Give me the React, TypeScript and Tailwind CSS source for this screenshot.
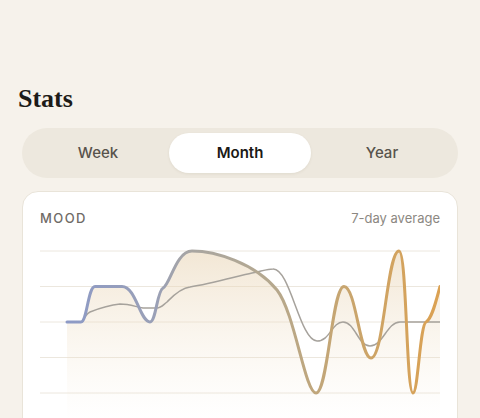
import { useState } from 'react'

const RANGES = ['Week', 'Month', 'Year'] as const

// y positions of the 5 mood levels (5 at top, 1 at bottom)
const GRID = [10, 45.5, 81, 116.5, 152]

const MOOD_PATH =
  'M27,81 L41,81 C47,81 48,45.5 55,45.5 L82,45.5 C96,45.5 100,81 110,81 ' +
  'C116,81 117,50 123,47 C130,44 136,10 152,10 C175,10 215,22 237,49 ' +
  'C255,72 265,152 276,152 C288,152 292,45.5 304,45.5 C316,45.5 320,117 331,117 ' +
  'C344,117 347,10 359,10 C367,10 366,152 373,152 C378,152 380,84 386,81 ' +
  'C392,78 396,60 400,45.5'

const AVG_PATH =
  'M42,81 C44,77 46,73 50,71 C60,67 70,64 80,63 C90,63 96,66 103,67 L117,67 ' +
  'C121,67 123,64 127,61 C131,57 140,47 150,46 C170,43 198,35 212,32 ' +
  'C222,30 228,28 233,28 C250,27 260,100 277,100 C290,100 292,81 303,81 ' +
  'C315,81 318,105 330,105 C343,105 347,81 360,81 L400,81'

function MoodChart() {
  return (
    <svg width="400" height="180" viewBox="0 0 400 180" className="block">
      <defs>
        <linearGradient id="mood-stroke" x1="27" y1="0" x2="400" y2="0" gradientUnits="userSpaceOnUse">
          <stop offset="0" stopColor="#8d9ac6" />
          <stop offset="0.24" stopColor="#9aa0b6" />
          <stop offset="0.34" stopColor="#a9a6a1" />
          <stop offset="0.55" stopColor="#b5a88e" />
          <stop offset="0.75" stopColor="#c8a56e" />
          <stop offset="1" stopColor="#dba152" />
        </linearGradient>
        <linearGradient id="mood-fill" x1="0" y1="10" x2="0" y2="180" gradientUnits="userSpaceOnUse">
          <stop offset="0" stopColor="#e8d3b2" stopOpacity="0.55" />
          <stop offset="1" stopColor="#f3e6d2" stopOpacity="0" />
        </linearGradient>
      </defs>
      {GRID.map((y) => (
        <line key={y} x1="0" x2="400" y1={y} y2={y} stroke="#ece7de" strokeWidth="1" />
      ))}
      <path d={`${MOOD_PATH} L400,180 L27,180 Z`} fill="url(#mood-fill)" />
      <path d={AVG_PATH} fill="none" stroke="#a6a29c" strokeWidth="1.5" strokeLinecap="round" />
      <path
        d={MOOD_PATH}
        fill="none"
        stroke="url(#mood-stroke)"
        strokeWidth="3"
        strokeLinecap="round"
        strokeLinejoin="round"
      />
    </svg>
  )
}

export default function App() {
  const [range, setRange] = useState<(typeof RANGES)[number]>('Month')

  return (
    <div className="min-h-screen bg-[#f6f2eb] pt-[83px] font-['Inter',sans-serif]">
      <h1 className="px-[18px] font-['Liberation_Serif',serif] text-[26px] font-bold leading-[32px] text-[#1d1b18]">
        Stats
      </h1>

      <div className="px-[22px]">
        <div className="mt-[13px] grid grid-cols-3 rounded-full bg-[#ede8de] p-[5px]">
          {RANGES.map((r) => (
            <button
              key={r}
              onClick={() => setRange(r)}
              className={
                r === range
                  ? 'h-10 rounded-full bg-white text-[15px] font-semibold text-[#1b1916] shadow-[0_1px_3px_rgba(80,60,30,0.08)]'
                  : 'h-10 rounded-full text-[15px] font-medium text-[#58534c]'
              }
            >
              {r}
            </button>
          ))}
        </div>

        <div className="mt-[13px] rounded-[16px] border border-[#e9e4d9] bg-white px-[17px] pb-4 pt-[17px]">
          <div className="flex items-center justify-between leading-[18px]">
            <span className="text-[13px] font-medium uppercase tracking-[0.11em] text-[#6f6b66]">Mood</span>
            <span className="text-[13px] text-[#8c8882]">7-day average</span>
          </div>
          <div className="mt-[14px]">
            <MoodChart />
          </div>
        </div>
      </div>
    </div>
  )
}
